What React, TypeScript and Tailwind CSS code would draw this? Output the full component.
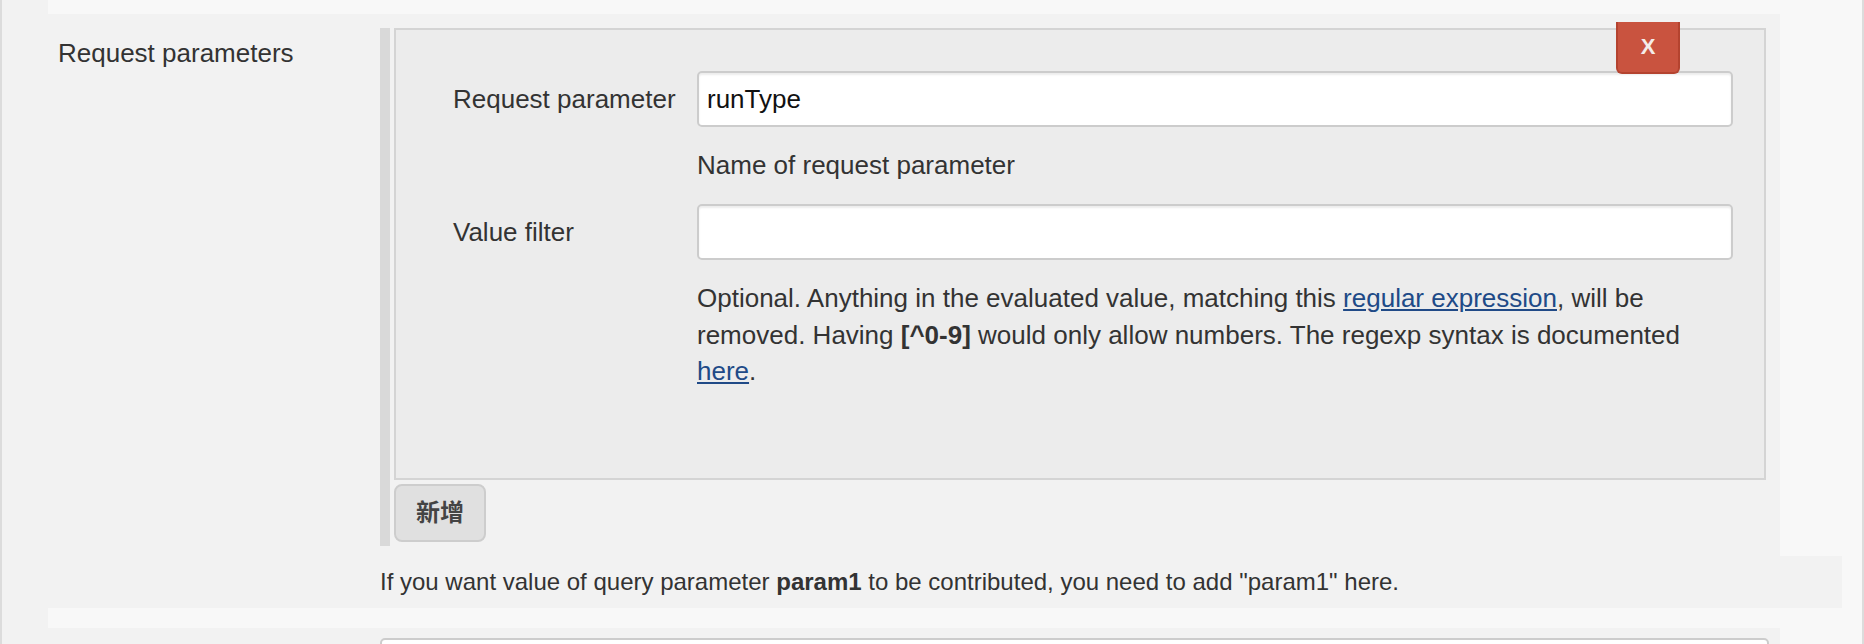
import { useState } from "react";

export default function App() {
  const [paramName, setParamName] = useState("runType");
  const [filter, setFilter] = useState("");

  return (
    <div className="flex h-[644px] w-[1864px] overflow-hidden border-x-2 border-[#dcdcdc] bg-[#f8f8f8] font-['Liberation_Sans','Noto_Sans_CJK_SC',sans-serif] text-[26px] leading-[1.4] text-[#333]">
      <div className="w-[46px] shrink-0 bg-[#f2f2f2]" />

      <div className="flex flex-1 flex-col pt-[14px]">
        {/* request parameters row */}
        <div className="flex h-[542px] w-[1732px] shrink-0 bg-[#f2f2f2]">
          <div className="w-[332px] shrink-0 pl-[10px] pt-[21px]">Request parameters</div>

          <div className="mt-[14px] flex flex-col self-start border-l-[10px] border-[#d9d9d9] pb-[4px] pl-[4px]">
            <div className="relative h-[452px] w-[1372px] border-2 border-[#d4d4d4] bg-[#ececec]">
              <button className="absolute -top-[8px] right-[84px] flex h-[52px] w-[64px] items-center justify-center rounded-b-[6px] border-2 border-t-0 border-[#b4432f] bg-[#c9533f] text-[22px] font-bold text-[#f4ecea]">
                X
              </button>

              <div className="pl-[57px] pt-[41px]">
                <div className="flex items-center">
                  <label className="w-[244px] shrink-0">Request parameter</label>
                  <input
                    value={paramName}
                    onChange={(e) => setParamName(e.target.value)}
                    className="h-[56px] w-[1036px] rounded-[5px] border-2 border-[#cccccc] bg-white px-[8px] text-[26px] text-[#111] shadow-[inset_0_2px_2px_rgba(0,0,0,0.075)] outline-none"
                  />
                </div>
                <div className="ml-[244px] mt-[20px] w-[1036px]">Name of request parameter</div>

                <div className="mt-[21px] flex items-center">
                  <label className="w-[244px] shrink-0">Value filter</label>
                  <input
                    value={filter}
                    onChange={(e) => setFilter(e.target.value)}
                    className="h-[56px] w-[1036px] rounded-[5px] border-2 border-[#cccccc] bg-white px-[8px] text-[26px] text-[#111] shadow-[inset_0_2px_2px_rgba(0,0,0,0.075)] outline-none"
                  />
                </div>
                <div className="ml-[244px] mt-[20px] w-[1036px]">
                  Optional. Anything in the evaluated value, matching this{" "}
                  <a href="#" className="text-[#204a87] underline">regular expression</a>, will be removed. Having{" "}
                  <b>[^0-9]</b> would only allow numbers. The regexp syntax is documented{" "}
                  <a href="#" className="text-[#204a87] underline">here</a>.
                </div>
              </div>
            </div>

            <button className="mt-[4px] flex h-[58px] w-[92px] items-center justify-center rounded-[8px] border-2 border-[#cdcdcd] bg-[#e0e0e0] text-[24px] font-bold text-[#444]">
              新增
            </button>
          </div>
        </div>

        {/* help row */}
        <div className="h-[52px] w-[1794px] shrink-0 bg-[#f2f2f2] pl-[332px] pt-[9px] text-[24px]">
          If you want value of query parameter <b>param1</b> to be contributed, you need to add "param1" here.
        </div>

        <div className="h-[20px] shrink-0" />

        {/* next row */}
        <div className="w-[1732px] flex-1 shrink-0 bg-[#f2f2f2] pl-[332px] pt-[10px]">
          <div className="h-[56px] w-[1389px] rounded-[5px] border-2 border-[#cccccc] bg-white" />
        </div>
      </div>
    </div>
  );
}
